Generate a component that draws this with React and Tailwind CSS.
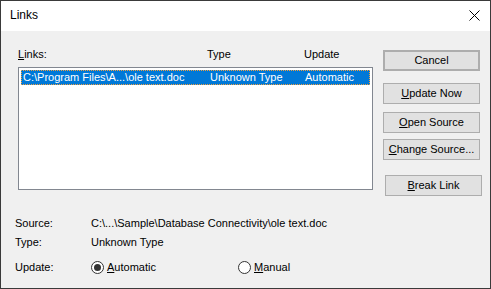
import React from "react";

const font = { fontFamily: '"Liberation Sans", Arial, sans-serif' };

function Btn({ children, className = "" }) {
  return (
    <div
      className={`h-[21px] w-[97px] flex items-center justify-center bg-[#e1e1e1] border border-[#adadad] text-[11px] text-black ${className}`}
    >
      {children}
    </div>
  );
}

function Radio({ checked }) {
  return (
    <span className="w-[13px] h-[13px] rounded-full border border-[#333] bg-white flex items-center justify-center shrink-0">
      {checked && <span className="w-[7px] h-[7px] rounded-full bg-[#333]" />}
    </span>
  );
}

export default function App() {
  return (
    <div
      style={font}
      className="w-[491px] h-[289px] border border-[#3a3a3a] bg-[#f0f0f0] flex flex-col text-[11px] leading-[15px] text-black"
    >
      {/* Title bar */}
      <div className="h-[30px] bg-white flex items-center justify-between pl-[9px] pr-[10px] shrink-0">
        <span className="text-[12px] -mt-[1px]">Links</span>
        <svg width="11" height="11" viewBox="0 0 11 11" className="-mt-[2px]">
          <path d="M0.5 0.5 L10.5 10.5 M10.5 0.5 L0.5 10.5" stroke="#000" strokeWidth="1" />
        </svg>
      </div>

      {/* Main row */}
      <div className="flex pl-[17px]">
        <div className="flex flex-col pt-[16px]">
          <div className="flex h-[15px]">
            <span className="w-[189px]"><span className="underline">L</span>inks:</span>
            <span className="w-[97px]">Type</span>
            <span>Update</span>
          </div>
          <div className="mt-[5px] w-[355px] h-[123px] border border-[#828790] bg-white pt-[2px] px-[2px]">
            <div className="h-[15px] bg-[#0078d7] text-white flex items-center pl-[2px] outline-1 outline-dotted outline-[#f0a040] -outline-offset-1">
              <span className="w-[187px]">C:\Program Files\A...\ole text.doc</span>
              <span className="w-[95px]">Unknown Type</span>
              <span>Automatic</span>
            </div>
          </div>
        </div>

        <div className="flex flex-col ml-[10px] pt-[19px]">
          <Btn className="border-2 border-[#0078d7]">Cancel</Btn>
          <Btn className="mt-[12px]"><span className="underline">U</span>pdate Now</Btn>
          <Btn className="mt-[8px]"><span className="underline">O</span>pen Source</Btn>
          <Btn className="mt-[6px]"><span className="underline">C</span>hange Source...</Btn>
          <Btn className="mt-[15px] ml-[2px]"><span className="underline">B</span>reak Link</Btn>
        </div>
      </div>

      {/* Details */}
      <div className="pl-[14px] mt-[20px] flex flex-col">
        <div className="flex h-[15px]">
          <span className="w-[76px]">Source:</span>
          <span>C:\...\Sample\Database Connectivity\ole text.doc</span>
        </div>
        <div className="flex h-[15px] mt-[4px]">
          <span className="w-[76px]">Type:</span>
          <span>Unknown Type</span>
        </div>
        <div className="flex h-[15px] mt-[10px] items-center">
          <span className="w-[76px]">Update:</span>
          <span className="flex items-center w-[147px]">
            <Radio checked />
            <span className="ml-[3px]"><span className="underline">A</span>utomatic</span>
          </span>
          <span className="flex items-center">
            <Radio />
            <span className="ml-[3px]"><span className="underline">M</span>anual</span>
          </span>
        </div>
      </div>
    </div>
  );
}
